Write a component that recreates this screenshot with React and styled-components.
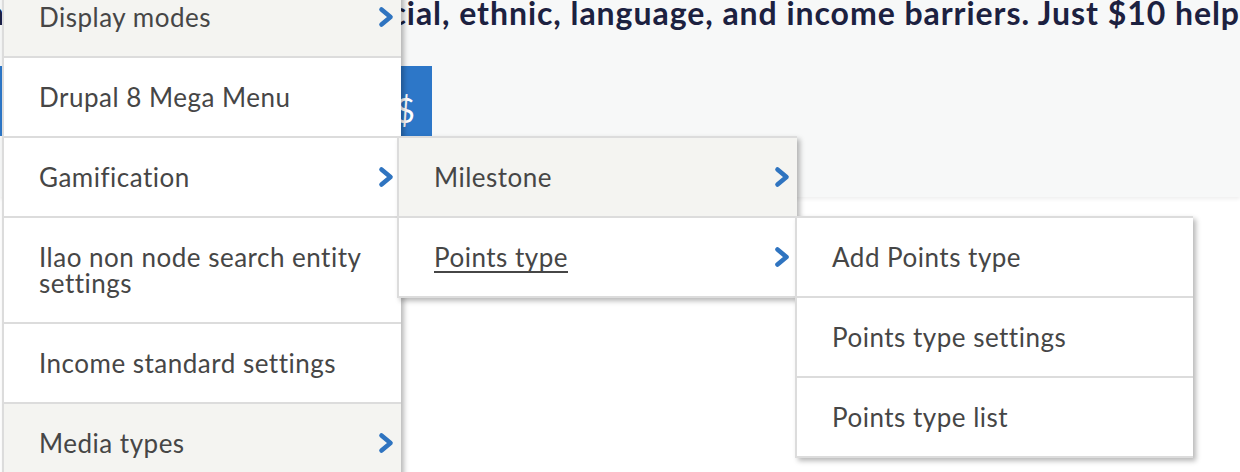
import React from 'react';
import styled, { createGlobalStyle } from 'styled-components';

const GlobalStyle = createGlobalStyle`
  html, body { margin: 0; padding: 0; background: #fff; }
  body { font-family: Lato, "Open Sans", sans-serif; -webkit-font-smoothing: antialiased; }
  *, *::before, *::after { box-sizing: border-box; }
`;

const Page = styled.div`
  position: relative;
  width: 1240px;
  height: 472px;
  overflow: hidden;
  background: #fff;
`;

const Hero = styled.section`
  height: 197px;
  background: #f7f8f8;
  box-shadow: 0 2px 4px rgba(0, 0, 0, 0.07);
  display: flex;
  flex-direction: column;
  align-items: flex-start;
`;

const LeadRow = styled.div`
  align-self: stretch;
  display: flex;
  justify-content: flex-end;
  margin-top: -3px;
  height: 32px;
`;

const Lead = styled.p`
  margin: 0;
  flex-shrink: 0;
  white-space: nowrap;
  font-size: 32px;
  line-height: 32px;
  letter-spacing: 0.95px;
  font-weight: 700;
  color: #1c2140;
`;

const DonateButton = styled.button`
  margin-top: 37px;
  width: 432px;
  height: 70px;
  border: 0;
  background: #2d77c8;
  color: #fff;
  display: flex;
  justify-content: flex-end;
  align-items: flex-end;
  padding: 0 17px 9px 0;
  font-family: Lato, sans-serif;
  font-weight: 400;
  font-size: 34px;
  line-height: 34px;
`;

const Column = styled.ul`
  position: absolute;
  left: ${(p) => p.$left}px;
  top: ${(p) => p.$top}px;
  z-index: ${(p) => p.$z};
  width: ${(p) => p.$width}px;
  margin: 0;
  padding: 0;
  list-style: none;
  background: #fff;
  border-top: 2px solid #dcdcdc;
  border-left: 2px solid #dcdcdc;
  box-shadow: 3px 3px 5px rgba(0, 0, 0, 0.28);
`;

const Item = styled.li`
  position: relative;
  display: flex;
  align-items: center;
  justify-content: space-between;
  gap: 12px;
  padding: 26px 7px 26px 35px;
  border-bottom: 2px solid #dcdcdc;
  background: ${(p) => (p.$active ? '#f4f4f1' : '#fff')};
`;

const Label = styled.a`
  flex: 1;
  font-size: 26px;
  line-height: 26px;
  letter-spacing: 0.5px;
  color: #464646;
  cursor: pointer;
  text-decoration: ${(p) => (p.$current ? 'underline' : 'none')};
  text-decoration-thickness: 2px;
  text-underline-offset: 4px;
`;

const ChevronIcon = styled.svg`
  flex-shrink: 0;
  width: 16px;
  height: 22px;
`;

const Chevron = () => (
  <ChevronIcon viewBox="0 0 16 22" aria-hidden="true">
    <polyline
      points="3.5,3.5 12.5,11 3.5,18.5"
      fill="none"
      stroke="#2f74c0"
      strokeWidth="4.6"
      strokeLinecap="round"
      strokeLinejoin="round"
    />
  </ChevronIcon>
);

const pointsMenu = [
  { label: 'Add Points type' },
  { label: 'Points type settings' },
  { label: 'Points type list' },
];

const gamificationMenu = [
  { label: 'Milestone', active: true, arrow: true },
  {
    label: 'Points type',
    current: true,
    arrow: true,
    sub: { items: pointsMenu, left: 396, top: -2, width: 398 },
  },
];

const rootMenu = [
  { label: 'Display modes', active: true, arrow: true },
  { label: 'Drupal 8 Mega Menu' },
  {
    label: 'Gamification',
    arrow: true,
    sub: { items: gamificationMenu, left: 393, top: -2, width: 400 },
  },
  { label: 'Ilao non node search entity settings' },
  { label: 'Income standard settings' },
  { label: 'Media types', active: true, arrow: true },
];

const Menu = ({ items, left, top, width, z }) => (
  <Column $left={left} $top={top} $width={width} $z={z}>
    {items.map((it) => (
      <Item key={it.label} $active={it.active}>
        <Label $current={it.current}>{it.label}</Label>
        {it.arrow && <Chevron />}
        {it.sub && (
          <Menu
            items={it.sub.items}
            left={it.sub.left}
            top={it.sub.top}
            width={it.sub.width}
            z={5}
          />
        )}
      </Item>
    ))}
  </Column>
);

export default function App() {
  return (
    <>
      <GlobalStyle />
      <Page>
        <Hero>
          <LeadRow>
            <Lead>
              Legal help for people facing racial, ethnic, language, and income barriers. Just $10 help
            </Lead>
          </LeadRow>
          <DonateButton type="button">$</DonateButton>
        </Hero>
        <Menu items={rootMenu} left={2} top={-24} width={399} z={10} />
      </Page>
    </>
  );
}
